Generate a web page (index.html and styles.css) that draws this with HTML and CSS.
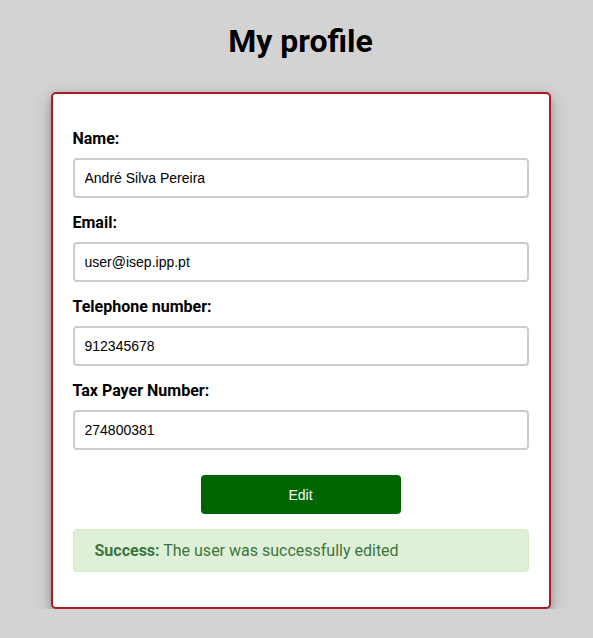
FILE: index.html
```html
<!DOCTYPE html>
<html lang="en">
<head>
<meta charset="utf-8">
<title>My profile</title>
<link rel="stylesheet" href="styles.css">
</head>
<body>
<main class="page">
  <h1 class="title">My profile</h1>
  <section class="card">
    <form class="form">
      <label class="label" for="name">Name:</label>
      <input class="input" id="name" type="text" value="André Silva Pereira">
      <label class="label" for="email">Email:</label>
      <input class="input" id="email" type="text" value="user@isep.ipp.pt">
      <label class="label" for="phone">Telephone number:</label>
      <input class="input" id="phone" type="text" value="912345678">
      <label class="label" for="tax">Tax Payer Number:</label>
      <input class="input" id="tax" type="text" value="274800381">
      <button class="btn" type="button">Edit</button>
    </form>
    <div class="alert"><strong>Success:</strong> The user was successfully edited</div>
  </section>
</main>
</body>
</html>
```
FILE: styles.css
```css
* { box-sizing: border-box; }
html, body { margin: 0; padding: 0; }
body {
  background: #d3d3d3;
  font-family: Roboto, "Liberation Sans", Arial, sans-serif;
  padding-left: 8px;
}
.page {
  display: flex;
  flex-direction: column;
  align-items: center;
}
.title {
  margin: 23px 0 0;
  font-size: 32px;
  line-height: 37px;
  font-weight: 700;
  color: #000;
}
.card {
  margin-top: 32px;
  width: 500px;
  background: #fff;
  border: 2px solid #a81c28;
  border-radius: 5px;
  padding: 35px 20px 35px;
  box-shadow: 0 4px 8px 0 rgba(0,0,0,0.2), 0 6px 20px 0 rgba(0,0,0,0.19);
}
.form {
  display: flex;
  flex-direction: column;
}
.label {
  font-size: 16px;
  font-weight: 700;
  line-height: 19px;
  color: #000;
  margin-bottom: 10px;
}
.input {
  height: 40px;
  width: 100%;
  border: 2px solid #cccccc;
  border-radius: 4px;
  padding: 0 10px;
  font-family: "Liberation Sans", Arial, sans-serif;
  font-size: 14px;
  color: #000;
  background: #fff;
  margin-bottom: 15px;
}
.btn {
  align-self: center;
  margin-top: 10px;
  width: 200px;
  height: 39px;
  border: none;
  border-radius: 4px;
  background: #006400;
  color: #fff;
  font-family: "Liberation Sans", Arial, sans-serif;
  font-size: 14px;
}
.alert {
  margin-top: 15px;
  background: #dff0d8;
  border: 1px solid #d6e9c6;
  border-radius: 4px;
  color: #3c763d;
  font-size: 16px;
  line-height: 19px;
  padding: 11px 20px 11px 21px;
}
```
